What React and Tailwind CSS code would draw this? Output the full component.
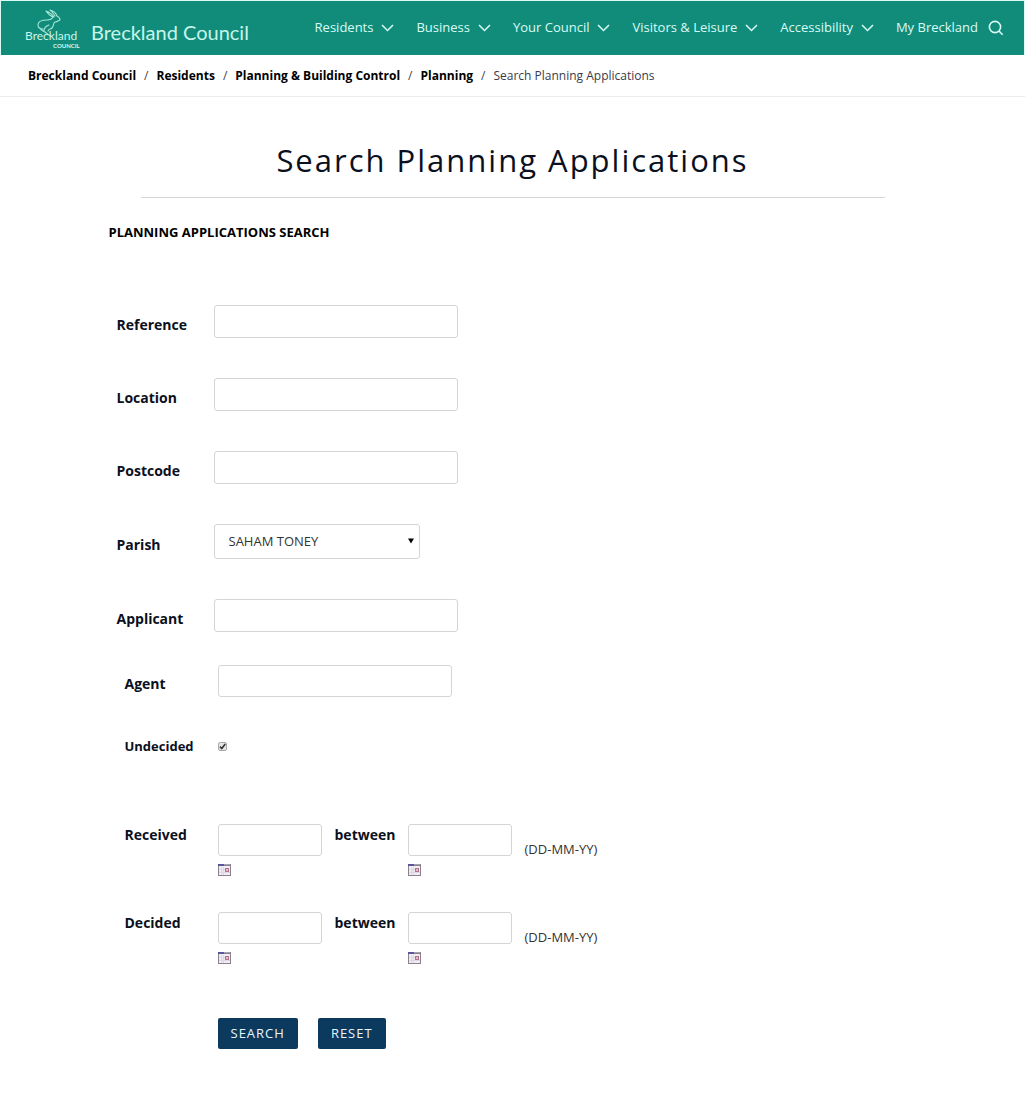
import React, {useState} from 'react';

const navItems = [
  {name: 'Residents', menu: true},
  {name: 'Business', menu: true},
  {name: 'Your Council', menu: true},
  {name: 'Visitors & Leisure', menu: true},
  {name: 'Accessibility', menu: true},
  {name: 'My Breckland', menu: false},
];

const crumbs = ['Breckland Council', 'Residents', 'Planning & Building Control', 'Planning'];

const inputClass = "rounded-[3px] border border-[#d5d5d5] bg-white px-3 text-sm text-[#333]";

function Logo() {
  return (
    <svg className="h-[42px] w-14 shrink-0" viewBox="0 0 56 42" fill="none" stroke="#a5e6d6" strokeLinecap="round" strokeLinejoin="round" aria-label="Breckland Council logo">
      <path strokeWidth="1.1" d="M29 10c-2-3-5-5-8-6 2 3 4 5 7 6M30 9c-2-3-3-5-5-6 4 1 6 3 7 6 2 1 3 2 3 4-2 1-3 2-5 2-2 1-1 4-3 6-1 1-3 1-4 3M28 10c-1 2-3 3-6 3-5 0-9 1-9 5 0 3 2 4 5 4M15 21c1 3 3 3 5 4 1 1 3 3 6 4M24 18c-3 1-5 3-5 6"/>
      <text x="0" y="33" fill="#c6f5ea" stroke="none" fontFamily="Lato, sans-serif" fontSize="12">Breckland</text>
      <text x="28" y="41" fill="#d5f8ef" stroke="none" fontFamily="Lato, sans-serif" fontSize="6" fontWeight="700">COUNCIL</text>
    </svg>
  )
}

function Chevron() {
  return (
    <svg className="h-2 w-[13px]" viewBox="0 0 13 8" fill="none" stroke="currentColor" strokeWidth="1.5" aria-hidden="true">
      <path d="M1 1l5.5 5.5L12 1"/>
    </svg>
  )
}

function CalendarIcon() {
  return (
    <svg className="h-3 w-[13px]" viewBox="0 0 13 12" shapeRendering="crispEdges" aria-hidden="true">
      <rect width="13" height="12" fill="#8b8289"/>
      <rect x="1" y="2" width="11" height="9" fill="#f0eef3"/>
      <rect width="6" height="2" fill="#5a549c"/>
      <rect x="6" width="6" height="1" fill="#a6a2b8"/>
      <path d="M3.5 3v8M5.5 3v8M1 5.5h6M1 8.5h11" stroke="#dcd9e4"/>
      <rect x="7" y="4" width="4" height="4" fill="#b5728c"/>
      <rect x="8" y="5" width="2" height="2" fill="#e3bccb"/>
    </svg>
  )
}

function Header() {
  return (
    <header className="flex h-[55px] items-center border-x border-t border-[#d9faf5] bg-[#118c7b] pr-5 pl-6">
      <a href="#" className="flex items-center gap-2.5 text-[#c6f5ea]">
        <Logo/>
        <span className="pt-2 font-[Lato] text-xl leading-6 whitespace-nowrap">Breckland Council</span>
      </a>
      <nav className="ml-auto flex items-center gap-[22px] text-[13px] text-[#d9fbf4]">
        {navItems.map((item) => (
          <a key={item.name} href="#" className="flex items-center gap-2 whitespace-nowrap">
            {item.name}
            {item.menu && <Chevron/>}
          </a>
        ))}
      </nav>
      <button type="button" aria-label="Search" className="ml-2.5 text-[#d9fbf4]">
        <svg className="size-4" viewBox="0 0 16 16" fill="none" stroke="currentColor" strokeWidth="1.6">
          <circle cx="7" cy="7" r="5.6"/>
          <path d="M11 11l3.6 3.8"/>
        </svg>
      </button>
    </header>
  )
}

function Field({id, label, labelClass, children}) {
  return (
    <div className="flex items-center">
      <label htmlFor={id} className={`${labelClass} shrink-0 pt-1.5 text-sm font-bold`}>{label}</label>
      {children}
    </div>
  )
}

function DateInput({id, label}) {
  return (
    <div className="flex flex-col items-start gap-2">
      <input id={id} type="text" aria-label={label} className={`${inputClass} h-8 w-26`}/>
      <button type="button" aria-label={`Pick ${label} date`}><CalendarIcon/></button>
    </div>
  )
}

function DateRange({id, label}) {
  return (
    <div className="flex items-start">
      <label htmlFor={`${id}-from`} className="w-[93px] shrink-0 text-sm leading-[22px] font-bold">{label}</label>
      <DateInput id={`${id}-from`} label={`${label} from`}/>
      <label htmlFor={`${id}-to`} className="w-[86px] shrink-0 pl-[13px] text-sm leading-[22px] font-bold">between</label>
      <DateInput id={`${id}-to`} label={`${label} to`}/>
      <span className="pt-3.5 pl-[13px] text-[13px] leading-[22px] text-[#333]">(DD-MM-YY)</span>
    </div>
  )
}

export default function App() {
  const [undecided, setUndecided] = useState(true);

  return (
    <div className="bg-white font-['Open_Sans',sans-serif] text-[#0b1020]">
      <Header/>
      <nav aria-label="Breadcrumb" className="flex h-[42px] items-center gap-2 border-b border-[#ececec] px-7 text-xs">
        {crumbs.map((crumb) => (
          <React.Fragment key={crumb}>
            <a href="#" className="font-bold text-black">{crumb}</a>
            <span className="text-[#444]">/</span>
          </React.Fragment>
        ))}
        <span className="text-[#3a3a4a]">Search Planning Applications</span>
      </nav>

      <main className="mx-auto max-w-[808px] pt-[39px] pb-14">
        <h1 className="mx-8 border-b border-[#d8d8d8] pb-[13px] text-center text-[31px] leading-12 tracking-[2px]">Search Planning Applications</h1>
        <h2 className="pt-6 text-[13px] leading-5 font-bold text-black">PLANNING APPLICATIONS SEARCH</h2>

        <form className="pt-[63px] pl-2" onSubmit={(e) => e.preventDefault()}>
          <div className="flex flex-col gap-10">
            <Field id="reference" label="Reference" labelClass="w-[97px]">
              <input id="reference" type="text" className={`${inputClass} h-[33px] w-[244px]`}/>
            </Field>
            <Field id="location" label="Location" labelClass="w-[97px]">
              <input id="location" type="text" className={`${inputClass} h-[33px] w-[244px]`}/>
            </Field>
            <Field id="postcode" label="Postcode" labelClass="w-[97px]">
              <input id="postcode" type="text" className={`${inputClass} h-[33px] w-[244px]`}/>
            </Field>
            <Field id="parish" label="Parish" labelClass="w-[97px]">
              <div className="relative">
                <select id="parish" className="h-[35px] w-[206px] appearance-none rounded-[3px] border border-[#d5d5d5] bg-white pl-3.5 text-[13px] text-[#333]">
                  <option>SAHAM TONEY</option>
                </select>
                <svg className="pointer-events-none absolute top-3.5 right-1.5 size-1.5" viewBox="0 0 6 6" aria-hidden="true">
                  <path d="M0 0.5h6L3 5.5z" fill="#000"/>
                </svg>
              </div>
            </Field>
            <Field id="applicant" label="Applicant" labelClass="w-[97px]">
              <input id="applicant" type="text" className={`${inputClass} h-[33px] w-[244px]`}/>
            </Field>
          </div>

          <div className="pt-[33px] pl-2">
            <Field id="agent" label="Agent" labelClass="w-[93px]">
              <input id="agent" type="text" className={`${inputClass} h-8 w-[234px]`}/>
            </Field>
            <div className="flex items-center pt-[39px]">
              <label htmlFor="undecided" className="w-[93px] text-[13px] leading-5 font-bold">Undecided</label>
              <span className="relative flex">
                <input id="undecided" type="checkbox" checked={undecided} onChange={(e) => setUndecided(e.target.checked)} className="size-[9px] appearance-none rounded-[2px] border border-[#a8a8a8] bg-[#e6e6e6]"/>
                {undecided && (
                  <svg className="pointer-events-none absolute inset-0 size-[9px]" viewBox="0 0 9 9" fill="none" stroke="#333" strokeWidth="1.6" aria-hidden="true">
                    <path d="M2 4.6l1.8 1.9L7.2 2"/>
                  </svg>
                )}
              </span>
            </div>
            <div className="flex flex-col gap-9 pt-17">
              <DateRange id="received" label="Received"/>
              <DateRange id="decided" label="Decided"/>
            </div>
            <div className="flex gap-5 pt-[54px] pl-[93px] text-[13px] tracking-[1px] text-[#e8f6ff]">
              <button type="submit" className="h-[31px] rounded-[2px] bg-[#0c3a5e] px-[13px]">SEARCH</button>
              <button type="reset" className="h-[31px] rounded-[2px] bg-[#0c3a5e] px-[13px]">RESET</button>
            </div>
          </div>
        </form>
      </main>
    </div>
  )
}
